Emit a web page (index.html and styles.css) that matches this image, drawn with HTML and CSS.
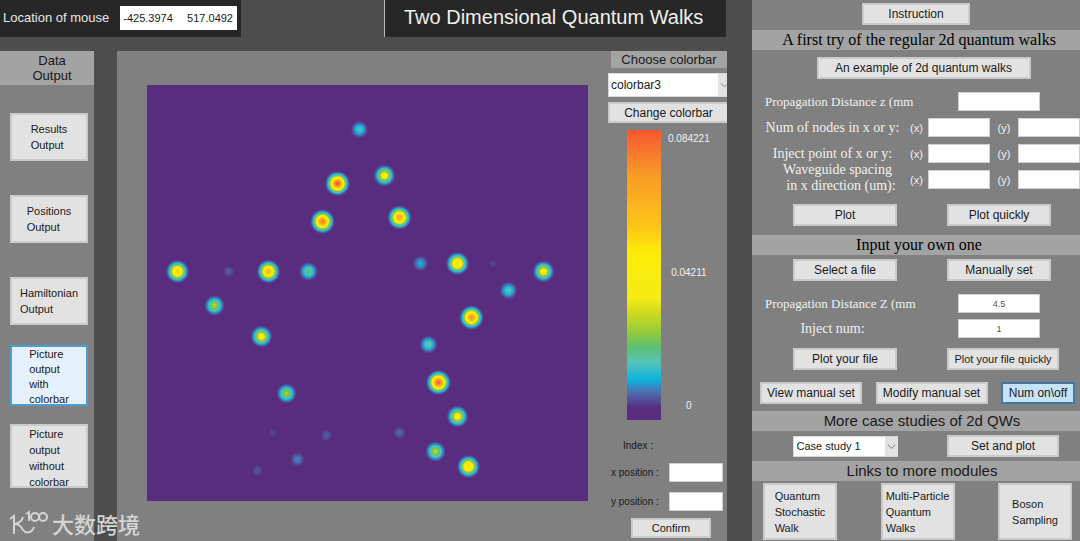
FILE: index.html
```html
<!DOCTYPE html>
<html lang="en">

<head>
    <meta charset="UTF-8">
    <meta name="viewport" content="width=device-width, initial-scale=1.0">
    <title>Two Dimensional Quantum Walks</title>
    <link rel="stylesheet" href="styles.css">
</head>

<body>
    <main class="workspace">
        <header class="top-bar">
            <div class="mouse-box">
                <span>Location of mouse</span>
                <output class="mouse-value"><span>-425.3974</span><span>517.0492</span></output>
            </div>
            <h1 class="title">Two Dimensional Quantum Walks</h1>
        </header>
        <div class="panels">
            <nav class="sidebar">
                <h2 class="sidebar-title">Data<br>Output</h2>
                <div class="output-list">
                    <button class="output-button"><span>Results<br>Output</span></button>
                    <button class="output-button"><span>Positions<br>Output</span></button>
                    <button class="output-button"><span>Hamiltonian<br>Output</span></button>
                </div>
                <div class="picture-list">
                    <button class="output-button hover"><span>Picture<br>output<br>with<br>colorbar</span></button>
                    <button class="output-button"><span>Picture<br>output<br>without<br>colorbar</span></button>
                </div>
            </nav>
            <section class="figure">
                <canvas class="plot" id="plot" width="441" height="416"></canvas>
                <div class="colorbar-column">
                    <label class="colorbar-title" for="colorbarSelect">Choose colorbar</label>
                    <div class="select-box colorbar-select">
                        <select id="colorbarSelect">
                            <option>colorbar3</option>
                        </select>
                        <svg class="arrow" viewBox="0 0 14 20"><path d="M3 8l4 4 4-4" /></svg>
                    </div>
                    <button class="change-button">Change colorbar</button>
                    <div class="scale">
                        <div class="scale-bar"></div>
                        <div class="ticks">
                            <span>0.084221</span>
                            <span>0.04211</span>
                            <span>0</span>
                        </div>
                    </div>
                    <form class="position-form" onsubmit="return false">
                        <p class="index-row">Index :</p>
                        <div class="position-row">
                            <label for="xPos">x position :</label>
                            <input type="text" id="xPos">
                        </div>
                        <div class="position-row">
                            <label for="yPos">y position :</label>
                            <input type="text" id="yPos">
                        </div>
                        <button class="confirm-button">Confirm</button>
                    </form>
                </div>
            </section>
        </div>
    </main>

    <aside class="controls">
        <div class="single-row first-row">
            <button class="instruction-button">Instruction</button>
        </div>
        <h2 class="band serif">A first try of the regular 2d quantum walks</h2>
        <div class="single-row example-row">
            <button class="example-button">An example of 2d quantum walks</button>
        </div>
        <div class="params">
            <label class="param-name long-name" for="distance">Propagation Distance z (mm</label>
            <input class="wide" type="text" id="distance">

            <span class="param-name">Num of nodes in x or y:</span>
            <label for="nodesX">(x)</label>
            <input type="text" id="nodesX">
            <label for="nodesY">(y)</label>
            <input type="text" id="nodesY">

            <span class="param-name">Inject point of x or y:</span>
            <label for="injectX">(x)</label>
            <input type="text" id="injectX">
            <label for="injectY">(y)</label>
            <input type="text" id="injectY">

            <span class="param-name two-lines">Waveguide spacing<br>&nbsp; in x direction (um):</span>
            <label for="spacingX">(x)</label>
            <input type="text" id="spacingX">
            <label for="spacingY">(y)</label>
            <input type="text" id="spacingY">
        </div>
        <div class="pair-row plot-row">
            <button>Plot</button>
            <button>Plot quickly</button>
        </div>

        <h2 class="band serif">Input your own one</h2>
        <div class="pair-row file-row">
            <button>Select a file</button>
            <button>Manually set</button>
        </div>
        <div class="params own-params">
            <label class="param-name long-name" for="ownDistance">Propagation Distance Z (mm</label>
            <input class="wide" type="text" id="ownDistance" value="4.5">
            <label class="param-name" for="injectNum">Inject num:</label>
            <input class="wide" type="text" id="injectNum" value="1">
        </div>
        <div class="pair-row plot-row">
            <button>Plot your file</button>
            <button class="small-text">Plot your file quickly</button>
        </div>
        <div class="manual-row">
            <button class="view-button">View manual set</button>
            <button class="modify-button">Modify manual set</button>
            <button class="num-button active">Num on\off</button>
        </div>

        <h2 class="band">More case studies of 2d QWs</h2>
        <div class="pair-row case-row">
            <div class="select-box">
                <select id="caseSelect" aria-label="Case study">
                    <option>Case study 1</option>
                </select>
                <svg class="arrow" viewBox="0 0 14 20"><path d="M3 8l4 4 4-4" /></svg>
            </div>
            <button class="set-button">Set and plot</button>
        </div>

        <h2 class="band">Links to more modules</h2>
        <div class="module-row">
            <button><span>Quantum<br>Stochastic<br>Walk</span></button>
            <button><span>Multi-Particle<br>Quantum<br>Walks</span></button>
            <button><span>Boson<br>Sampling</span></button>
        </div>
    </aside>

    <div class="watermark">
        <svg width="40" height="26" viewBox="0 0 40 26">
            <path d="M1 9l4-3v18M14 7c-1 4-4 6-8 7 5 0 6 3 8 6 3 4 9 3 11-3" />
            <path d="M17 4l3-2v9" />
            <circle cx="26" cy="7" r="4" />
            <circle cx="34" cy="7" r="4" />
        </svg>
        <span lang="zh">大数跨境</span>
    </div>

    <script>
        // position in the plot (x, y) and peak value relative to the maximum
        var peaks = [
            [212, 44, 0.19], [190, 98, 1], [237, 90, 0.46], [175, 136, 0.9],
            [252, 132, 0.8], [30, 186, 0.65], [81, 186, 0.08], [121, 186, 0.72],
            [161, 186, 0.25], [273, 178, 0.14], [310, 178, 0.63], [346, 178, 0.06],
            [396, 186, 0.46], [361, 205, 0.2], [324, 232, 0.86], [67, 220, 0.34],
            [114, 251, 0.46], [281, 259, 0.22], [291, 297, 0.98], [139, 308, 0.32],
            [310, 331, 0.46], [125, 347, 0.06], [179, 350, 0.08], [252, 347, 0.09],
            [150, 374, 0.11], [110, 385, 0.075], [288, 366, 0.34], [321, 381, 0.62]
        ];
        var colormap = [
            [0, 88, 44, 126], [0.04, 88, 44, 126], [0.1, 76, 116, 180],
            [0.14, 10, 180, 220], [0.2, 88, 196, 184], [0.25, 92, 190, 116],
            [0.3, 146, 202, 60], [0.37, 208, 218, 32], [0.42, 244, 236, 20],
            [0.58, 254, 236, 8], [0.67, 252, 196, 24], [0.84, 249, 156, 38],
            [0.95, 246, 108, 48], [1, 248, 88, 44]
        ];
        var sigma = 5;
        var canvas = document.querySelector("#plot");
        var ctx = canvas.getContext("2d");

        function colorOf(value) {
            value = Math.min(value, 1);
            var i = 1;
            while (colormap[i][0] < value) {
                i++;
            }
            var a = colormap[i - 1];
            var b = colormap[i];
            var t = (value - a[0]) / (b[0] - a[0]);
            return [1, 2, 3].map((c) => a[c] + (b[c] - a[c]) * t);
        }

        function drawPlot() {
            var image = ctx.createImageData(canvas.width, canvas.height);
            for (var y = 0; y < canvas.height; y++) {
                for (var x = 0; x < canvas.width; x++) {
                    var value = 0;
                    peaks.forEach((p) => {
                        var d = (x - p[0]) ** 2 + (y - p[1]) ** 2;
                        value += p[2] * Math.exp(-d / (2 * sigma * sigma));
                    });
                    var rgb = colorOf(value);
                    image.data.set([rgb[0], rgb[1], rgb[2], 255], (y * canvas.width + x) * 4);
                }
            }
            ctx.putImageData(image, 0, 0);
        }
        drawPlot();
    </script>
</body>

</html>
```
FILE: styles.css
```css
* {
    box-sizing: border-box;
}

body {
    margin: 0;
    min-height: 100vh;
    display: grid;
    grid-template-columns: minmax(0, 1fr) 328px;
    column-gap: 25px;
    background-color: #4d4d4d;
    color: #1a1a1a;
    font-family: "Liberation Sans", Arial, sans-serif;
    font-size: 12px;
    overflow-x: hidden;
}

h1,
h2,
p {
    margin: 0;
    font-weight: normal;
}

button {
    padding: 0;
    border: 2px solid #cacaca;
    background-color: #e2e2e2;
    color: #1a1a1a;
    font-family: inherit;
    font-size: 12px;
    white-space: nowrap;
    cursor: pointer;
}

button span {
    display: inline-block;
    text-align: left;
    line-height: 16px;
}

input {
    min-width: 0;
    height: 19px;
    padding: 0;
    border: 1px solid #d0d0d0;
    background-color: white;
    color: #555;
    font-family: inherit;
    font-size: 9px;
    text-align: center;
}

.workspace {
    display: flex;
    flex-direction: column;
    gap: 14px;
}

/* top */
.top-bar {
    display: flex;
    justify-content: space-between;
    height: 37px;
    padding-right: 1px;
}

.mouse-box {
    display: flex;
    align-items: center;
    gap: 11px;
    width: 241px;
    padding: 0 4px 2px 3px;
    background-color: #272727;
    color: #e8e8e8;
    font-size: 13px;
    white-space: nowrap;
}

.mouse-value {
    flex: 1;
    display: flex;
    justify-content: space-between;
    padding: 0 4px 0 3px;
    line-height: 24px;
    background-color: white;
    color: #1a1a1a;
    font-size: 11px;
}

.title {
    width: 342px;
    border-left: 1px solid #bbb;
    background-color: #272727;
    color: #f0f0f0;
    font-size: 20px;
    line-height: 34px;
    padding-left: 19px;
    white-space: nowrap;
}

.panels {
    flex: 1;
    display: flex;
    gap: 23px;
}

/* left buttons */
.sidebar {
    flex: 0 0 94px;
    background-color: #808080;
}

.sidebar-title {
    padding: 2px 0 2px 10px;
    background-color: #a3a3a3;
    font-size: 13px;
    line-height: 15px;
    text-align: center;
}

.output-list,
.picture-list {
    display: flex;
    flex-direction: column;
    align-items: center;
    padding-left: 4px;
}

.output-list {
    gap: 34px;
    padding-top: 28px;
    padding-bottom: 20px;
}

.picture-list {
    gap: 18px;
}

.output-button {
    width: 78px;
    padding: 6px 0;
    font-size: 11px;
}

.picture-list .output-button {
    height: 64px;
    padding: 0;
    overflow: hidden;
}

.picture-list .hover {
    height: 61px;
    border-color: #4a9fd0;
    background-color: #e5f1fc;
}

.hover span {
    line-height: 15px;
}

/* plot and colorbar */
.figure {
    flex: 1;
    min-width: 0;
    display: grid;
    grid-template-columns: minmax(0, 1fr) 119px;
    column-gap: 20px;
    align-items: start;
    padding-left: 30px;
    background-color: #808080;
    overflow: hidden;
}

.plot {
    display: block;
    width: 100%;
    margin-top: 34px;
}

.colorbar-column {
    display: flex;
    flex-direction: column;
}

.colorbar-title {
    margin-left: 3px;
    background-color: #a3a3a3;
    font-size: 13px;
    line-height: 17px;
    text-align: center;
}

.select-box {
    position: relative;
    width: 105px;
    height: 21px;
}

.select-box select {
    width: 100%;
    height: 100%;
    padding: 0 14px 0 3px;
    border: 1px solid #d8d8d8;
    border-radius: 0;
    appearance: none;
    background-color: white;
    color: #1a1a1a;
    font-family: inherit;
    font-size: 11px;
}

.select-box .arrow {
    position: absolute;
    top: 1px;
    right: 0;
    width: 13px;
    height: calc(100% - 2px);
    background-color: #e2e2e2;
    fill: none;
    stroke: #777;
    pointer-events: none;
}

.colorbar-select {
    width: 123px;
    height: 24px;
    margin-top: 5px;
}

.colorbar-select select {
    padding-left: 2px;
    font-size: 12px;
}

.change-button {
    height: 21px;
    margin: 5px 0 7px;
    border-right: none;
}

.scale {
    display: flex;
    gap: 7px;
    height: 290px;
    padding-left: 19px;
}

.scale-bar {
    width: 34px;
    background: linear-gradient(to top, #582c7e 4%, #4c74b4 10%, #0ab4dc 14%, #58c4b8 20%,
            #5cbe74 25%, #92ca3c 30%, #d0da20 37%, #f4ec14 42%, #feec08 58%, #fcc418 67%,
            #f99c26 84%, #f66c30 95%, #f8582c);
}

.ticks {
    display: flex;
    flex-direction: column;
    justify-content: space-between;
    align-items: center;
    padding: 3px 0 9px;
    color: #f0f0f0;
    font-size: 10px;
}

.position-form {
    display: flex;
    flex-direction: column;
    padding: 18px 4px 0 3px;
    font-size: 10px;
}

.index-row {
    margin: 0 0 9px 12px;
    line-height: 16px;
}

.position-row {
    display: flex;
    justify-content: space-between;
    align-items: center;
    margin-bottom: 10px;
}

.position-row input {
    width: 54px;
}

.confirm-button {
    width: 80px;
    height: 20px;
    margin: -3px 0 4px 20px;
    font-size: 11px;
}

/* right panel */
.controls {
    background-color: #808080;
}

.band {
    background-color: #a3a3a3;
    font-size: 15px;
    line-height: 20px;
    text-align: center;
    white-space: nowrap;
    padding-left: 12px;
}

.serif {
    font-family: "Liberation Serif", "Times New Roman", serif;
    font-size: 16px;
    padding-left: 6px;
    color: black;
}

.single-row {
    display: flex;
    justify-content: center;
}

.single-row button {
    height: 22px;
}

.first-row {
    padding: 3px 0 5px;
}

.instruction-button {
    width: 108px;
}

.example-row {
    padding: 7px 0 13px 15px;
}

.example-button {
    width: 214px;
}

.params {
    display: grid;
    grid-template-columns: minmax(0, 1fr) 23px 62px 28px 62px;
    row-gap: 7px;
    align-items: center;
    padding: 0 0 15px 8px;
    color: #f0f0f0;
    font-size: 11px;
    text-align: center;
}

.param-name {
    font-family: "Liberation Serif", "Times New Roman", serif;
    font-size: 14px;
    line-height: 19px;
    white-space: nowrap;
}

.long-name {
    padding-left: 5px;
    font-size: 13px;
}

.two-lines {
    line-height: 16px;
    margin: -8px 0 -5px;
    padding-left: 10px;
}

.params .wide {
    grid-column: 3 / 6;
    width: 82px;
    margin-left: 30px;
}

.own-params {
    row-gap: 6px;
    padding-top: 13px;
    padding-bottom: 10px;
}

.pair-row {
    display: grid;
    grid-template-columns: 1fr 1fr;
    justify-items: center;
    align-items: center;
    padding: 0 4px 0 16px;
}

.pair-row button {
    width: 104px;
    height: 22px;
}

.plot-row {
    margin-bottom: 9px;
}

.file-row {
    padding-top: 4px;
}

.pair-row .small-text,
.pair-row .set-button {
    width: 112px;
    margin-left: 8px;
}

.small-text {
    font-size: 11px;
}

.manual-row {
    display: flex;
    justify-content: space-between;
    padding: 3px 5px 7px 8px;
}

.manual-row button {
    height: 22px;
}

.view-button {
    width: 102px;
}

.modify-button {
    width: 112px;
}

.num-button {
    width: 74px;
}

.manual-row .active {
    border-color: #3f78a0;
    background-color: #c4e2f8;
}

.case-row {
    padding-top: 4px;
    padding-bottom: 4px;
}

.module-row {
    display: flex;
    justify-content: space-between;
    padding: 2px 8px 0 11px;
}

.module-row button {
    width: 74px;
    height: 57px;
    font-size: 11px;
}

.watermark {
    position: absolute;
    left: 9px;
    bottom: 5px;
    display: flex;
    align-items: center;
    gap: 3px;
    color: #d4d4d4;
    font-family: "Noto Sans CJK SC", sans-serif;
    font-size: 22px;
    line-height: 26px;
    font-weight: 500;
}

.watermark svg {
    fill: none;
    stroke: #d4d4d4;
    stroke-width: 2;
}
```
